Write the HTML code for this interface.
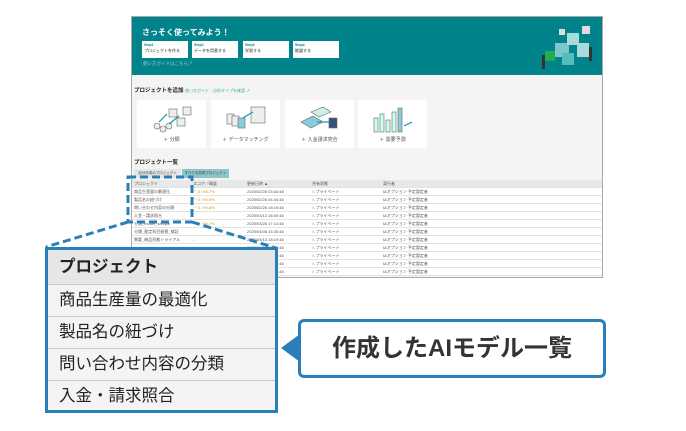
<!DOCTYPE html>
<html><head><meta charset="utf-8"><style>
*{margin:0;padding:0;box-sizing:border-box}
body{width:686px;height:431px;background:#fff;position:relative;overflow:hidden;font-family:"Liberation Sans","Noto Sans CJK JP",sans-serif;color:#333}
.a{position:absolute}
.shot{left:131px;top:16px;width:472px;height:262px;border:1px solid #aaa;background:#f4f4f4}
.hd{left:0;top:0;width:470px;height:58px;background:#00838a}
.step{background:#fff;width:46px;height:17px;font-size:4px;padding:1px 2px;line-height:6px;color:#222}
.step b{color:#00838a;display:block;font-size:3.5px}
.card{background:#fff;width:69px;height:48px;top:83px}
.card span{position:absolute;bottom:5px;width:100%;text-align:center;font-size:5px;color:#555}
.row{left:0;width:470px;height:8px;border-bottom:1px solid #e2e2e2;font-size:4px;line-height:8px;color:#555;background:#fff}
.row span{position:absolute}
.cb{left:45px;top:247px;width:233px;height:166px;border:3px solid #2a7fb8;background:#f4f4f4}
.cr{position:absolute;left:0;width:227px;height:32px;border-top:1px solid #c8c8c8;font-size:16.5px;line-height:31px;padding-left:11px;color:#222}
</style></head><body>
<div class="a shot">
 <div class="a hd">
  <div class="a" style="left:10px;top:10px;color:#fff;font-size:8px;font-weight:bold">さっそく使ってみよう！</div>
  <div class="a step" style="left:10px;top:24px"><b>Step1</b>プロジェクトを作る</div>
  <div class="a step" style="left:60px;top:24px"><b>Step2</b>データを用意する</div>
  <div class="a step" style="left:111px;top:24px"><b>Step3</b>学習する</div>
  <div class="a step" style="left:161px;top:24px"><b>Step4</b>推論する</div>
  <div class="a" style="left:11px;top:44px;color:#9cd;font-size:4.5px">使い方ガイドはこちら↗</div>
  <svg class="a" style="left:405px;top:4px" width="62" height="52"><g fill="#7cc7c9"><rect x="18" y="22" width="14" height="14"/><rect x="30" y="12" width="12" height="12" fill="#a8dcdc"/><rect x="25" y="32" width="12" height="12" fill="#5bb"/><rect x="40" y="22" width="12" height="14" fill="#a8dcdc"/><rect x="8" y="30" width="10" height="10" fill="#2a5"/><rect x="45" y="5" width="8" height="8" fill="#ddd"/><rect x="22" y="8" width="6" height="6" fill="#ddd"/></g><rect x="5" y="34" width="3" height="14" fill="#333"/><rect x="52" y="26" width="3" height="14" fill="#333"/></svg>
 </div>
 <div class="a" style="left:2px;top:69px;font-size:5.5px;font-weight:bold;color:#222">プロジェクトを追加 <span style="font-weight:normal;color:#4aa;font-size:4px">使い方ガイド：分析タイプを確認 ↗</span></div>
 <div class="a card" style="left:5px"><svg class="a" style="left:12px;top:4px" width="46" height="30"><g stroke="#666" fill="#eee" stroke-width=".6"><circle cx="8" cy="22" r="3"/><circle cx="14" cy="25" r="3"/><circle cx="20" cy="22" r="3"/><rect x="28" y="14" width="8" height="8"/><rect x="34" y="3" width="8" height="8"/><rect x="20" y="5" width="8" height="8"/></g><path d="M10 18 L18 10 M20 20 L30 12" stroke="#19a" stroke-width="1.2"/></svg><span>＋ 分類</span></div>
 <div class="a card" style="left:79px"><svg class="a" style="left:12px;top:4px" width="46" height="30"><g stroke="#666" fill="#eee" stroke-width=".6"><rect x="4" y="10" width="7" height="10"/><rect x="9" y="12" width="7" height="10"/><rect x="15" y="14" width="7" height="10" fill="#8cd"/><rect x="28" y="3" width="14" height="16"/></g><path d="M20 14 L30 8" stroke="#19a" stroke-width="1.2"/></svg><span>＋ データマッチング</span></div>
 <div class="a card" style="left:153px"><svg class="a" style="left:12px;top:4px" width="46" height="30"><g stroke="#666" stroke-width=".6"><path d="M4 18 L16 12 L26 18 L14 24Z" fill="#8cd"/><path d="M14 8 L26 3 L34 8 L22 13Z" fill="#cee"/><rect x="32" y="14" width="8" height="10" fill="#357"/></g><path d="M20 18 L32 18" stroke="#19a" stroke-width="1.2"/></svg><span>＋ 入金請求突合</span></div>
 <div class="a card" style="left:226px"><svg class="a" style="left:12px;top:4px" width="46" height="30"><g stroke="#666" fill="#cfe" stroke-width=".6"><rect x="4" y="14" width="4" height="14"/><rect x="10" y="10" width="4" height="18"/><rect x="16" y="16" width="4" height="12"/><rect x="22" y="8" width="4" height="20"/><rect x="28" y="4" width="4" height="24" fill="#8cd"/></g><path d="M34 22 L42 18" stroke="#19a" stroke-width="1.2"/></svg><span>＋ 需要予測</span></div>
 <div class="a" style="left:2px;top:141px;font-size:5.5px;font-weight:bold;color:#222">プロジェクト一覧</div>
 <div class="a" style="left:2px;top:152px;width:47px;height:9px;background:#e6e6e6;font-size:3.5px;line-height:9px;text-align:center">自分作成のプロジェクト</div>
 <div class="a" style="left:50px;top:152px;width:47px;height:9px;background:#8fc6c8;font-size:3.5px;line-height:9px;text-align:center">すべての共有プロジェクト</div>
 <div class="a row" style="top:163px;background:#e8e8e8"><span style="left:2px">プロジェクト</span><span style="left:61px">スコア／精度</span><span style="left:115px">更新日時 ▲</span><span style="left:180px">共有状態</span><span style="left:251px">実行者</span></div>
 <div class="a row" style="top:171px"><span style="left:2px">商品生産量の最適化</span><span style="left:61px;color:#c90">◠ 5 / 98.7%</span><span style="left:115px">2025/02/28 03:34:48</span><span style="left:180px">⌂ プライベート</span><span style="left:251px">IAオプション 予定設定者</span></div>
 <div class="a row" style="top:179px"><span style="left:2px">製品名の紐づけ</span><span style="left:61px;color:#c90">◠ 5 / 99.8%</span><span style="left:115px">2025/02/28 04:44:48</span><span style="left:180px">⌂ プライベート</span><span style="left:251px">IAオプション 予定設定者</span></div>
 <div class="a row" style="top:187px"><span style="left:2px">問い合わせ内容の分類</span><span style="left:61px;color:#c90">◠ 5 / 99.8%</span><span style="left:115px">2025/02/28 18:19:48</span><span style="left:180px">⌂ プライベート</span><span style="left:251px">IAオプション 予定設定者</span></div>
 <div class="a row" style="top:195px"><span style="left:2px">入金・請求照合</span><span style="left:115px">2025/03/13 18:09:48</span><span style="left:180px">⌂ プライベート</span><span style="left:251px">IAオプション 予定設定者</span></div>
 <div class="a row" style="top:203px"><span style="left:2px">分類_model_sample</span><span style="left:61px;color:#c90">◠ 5 / 98.7%</span><span style="left:115px">2025/03/26 17:14:48</span><span style="left:180px">⌂ プライベート</span><span style="left:251px">IAオプション 予定設定者</span></div>
 <div class="a row" style="top:211px"><span style="left:2px">分類_勘定科目振替_検証</span><span style="left:115px">2025/04/08 15:30:48</span><span style="left:180px">⌂ プライベート</span><span style="left:251px">IAオプション 予定設定者</span></div>
 <div class="a row" style="top:219px"><span style="left:2px">需要_納品形態トライアル</span><span style="left:61px">-</span><span style="left:115px">2025/04/13 18:19:48</span><span style="left:180px">⌂ プライベート</span><span style="left:251px">IAオプション 予定設定者</span></div>
 <div class="a row" style="top:227px"><span style="left:115px">2025/04/13 18:19:48</span><span style="left:180px">⌂ プライベート</span><span style="left:251px">IAオプション 予定設定者</span></div>
 <div class="a row" style="top:235px"><span style="left:115px">2025/04/13 18:19:48</span><span style="left:180px">⌂ プライベート</span><span style="left:251px">IAオプション 予定設定者</span></div>
 <div class="a row" style="top:243px"><span style="left:115px">2025/04/13 18:19:48</span><span style="left:180px">⌂ プライベート</span><span style="left:251px">IAオプション 予定設定者</span></div>
 <div class="a row" style="top:251px"><span style="left:115px">2025/04/13 18:19:48</span><span style="left:180px">⌂ プライベート</span><span style="left:251px">IAオプション 予定設定者</span></div>
</div>
<svg class="a" style="left:0;top:0" width="686" height="431"><g stroke="#2a7fb8" stroke-width="3" fill="none" stroke-dasharray="8 4"><rect x="128" y="177" width="64" height="45"/><path d="M128 222 L46 247 M192 222 L276 248"/></g></svg>
<div class="a cb">
 <div class="cr" style="top:0;border-top:none;background:#e6e6e6;font-weight:bold;height:34px;line-height:34px">プロジェクト</div>
 <div class="cr" style="top:34px">商品生産量の最適化</div>
 <div class="cr" style="top:66px">製品名の紐づけ</div>
 <div class="cr" style="top:98px">問い合わせ内容の分類</div>
 <div class="cr" style="top:130px">入金・請求照合</div>
</div>
<svg class="a" style="left:280px;top:330px" width="22" height="36"><path d="M1 18 L20 4 L20 32Z" fill="#2a7fb8"/></svg>
<div class="a" style="left:298px;top:319px;width:308px;height:59px;border:3px solid #2a7fb8;border-radius:6px;background:#fff;font-size:24px;font-weight:bold;text-align:center;line-height:53px;color:#333">作成したAIモデル一覧</div>
</body></html>
